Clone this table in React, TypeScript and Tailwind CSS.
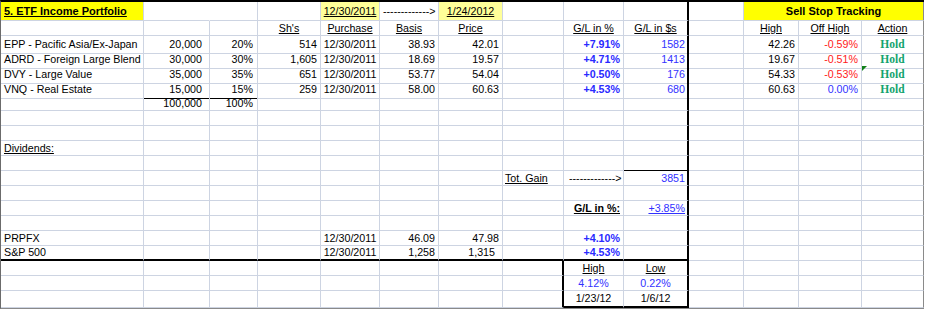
import type { ReactNode } from "react";
import { twMerge } from "tailwind-merge";

type CellSpec = {
  t?: ReactNode;
  a?: "l" | "r" | "c";
  cls?: string;
};

type RowSpec = {
  h?: string;
  cells: Record<number, CellSpec>;
  span?: Record<number, string>;
};

const BLUE = "text-[#3232ff]";
const BLUE_B = "text-[#2a2aff] font-bold";
const RED = "text-[#ff1a1a]";

const hold: CellSpec = {
  t: "Hold",
  a: "c",
  cls: "font-['Liberation_Serif',serif] font-bold text-[11.5px] text-[#12a36e]",
};

const head = (t: string): CellSpec => ({ t, a: "c", cls: "underline" });
const num = (t: ReactNode, cls = ""): CellSpec => ({ t, a: "r", cls });

const ARROW = "------------->";

function holding(
  name: string,
  amt: string,
  pct: string,
  sh: string,
  basis: string,
  price: string,
  gl: string,
  gld: string,
  high: string,
  off: string,
  offCls: string,
): Record<number, CellSpec> {
  return {
    0: { t: name },
    1: num(amt, "pr-[7px]"),
    2: num(pct, "pr-[4px]"),
    3: num(sh),
    4: { t: "12/30/2011", a: "c" },
    5: num(basis),
    6: num(price),
    8: num(gl, BLUE_B),
    9: num(gld, BLUE + " pr-[2px]"),
    11: num(high),
    12: num(off, offCls),
    13: hold,
  };
}

const rows: RowSpec[] = [
  {
    h: "h-[19px]",
    cells: {
      0: {
        t: "5. ETF Income Portfolio",
        cls: "bg-[#ffff00] font-bold underline text-[11px]",
      },
      1: { cls: "border-r-transparent" },
      4: { t: "12/30/2011", a: "c", cls: "bg-[#ffff99] underline" },
      5: { t: ARROW, cls: "pl-[3px]" },
      6: { t: "1/24/2012", a: "c", cls: "bg-[#ffff99] underline" },
      11: {
        t: "Sell Stop Tracking",
        a: "c",
        cls: "bg-[#ffff00] font-bold text-[11px] border-r-[#8a8a8a]",
      },
    },
    span: { 11: "col-span-3" },
  },
  {
    cells: {
      3: head("Sh's"),
      4: head("Purchase"),
      5: head("Basis"),
      6: head("Price"),
      8: head("G/L in %"),
      9: head("G/L in $s"),
      11: head("High"),
      12: head("Off High"),
      13: head("Action"),
    },
  },
  {
    cells: holding("EPP - Pacific Asia/Ex-Japan", "20,000", "20%", "514", "38.93", "42.01", "+7.91%", "1582", "42.26", "-0.59%", RED),
  },
  {
    cells: holding("ADRD - Foreign Large Blend", "30,000", "30%", "1,605", "18.69", "19.57", "+4.71%", "1413", "19.67", "-0.51%", RED),
  },
  {
    cells: {
      ...holding("DVY - Large Value", "35,000", "35%", "651", "53.77", "54.04", "+0.50%", "176", "54.33", "-0.53%", RED),
      13: { ...hold, t: <>
        <span className="absolute left-0 top-0 h-0 w-0 border-r-[5px] border-t-[5px] border-r-transparent border-t-[#11801a]" />
        Hold
      </>, cls: hold.cls + " relative" },
    },
  },
  {
    cells: (() => {
      const c = holding("VNQ - Real Estate", "15,000", "15%", "259", "58.00", "60.63", "+4.53%", "680", "60.63", "0.00%", BLUE);
      c[1] = { ...c[1], cls: c[1].cls + " border-b-black" };
      c[2] = { ...c[2], cls: c[2].cls + " border-b-black" };
      return c;
    })(),
  },
  { cells: { 1: num("100,000", "pr-[7px]"), 2: num("100%", "pr-[4px]") } },
  { cells: {} },
  { cells: {} },
  { cells: { 0: { t: "Dividends:", cls: "underline" } } },
  { cells: { 9: { cls: "border-b-black" } } },
  {
    cells: {
      7: { t: "Tot. Gain", cls: "underline pl-[2px]" },
      8: { t: ARROW, cls: "pl-[5px]" },
      9: num("3851", BLUE + " pr-[2px]"),
    },
  },
  { cells: {} },
  {
    cells: {
      8: num("G/L in %:", "font-bold underline"),
      9: num("+3.85%", BLUE + " underline pr-[2px]"),
    },
  },
  { cells: {} },
  {
    cells: {
      0: { t: "PRPFX" },
      4: { t: "12/30/2011", a: "c" },
      5: num("46.09"),
      6: num("47.98"),
      8: num("+4.10%", BLUE_B),
    },
  },
  {
    cells: {
      0: { t: "S&P 500" },
      4: { t: "12/30/2011", a: "c" },
      5: num("1,258"),
      6: num("1,315", "pr-[7px]"),
      8: num("+4.53%", BLUE_B),
    },
  },
  {
    cells: {
      7: { cls: "border-r-2 border-r-black" },
      8: head("High"),
      9: head("Low"),
    },
  },
  {
    cells: {
      7: { cls: "border-r-2 border-r-black" },
      8: { t: "4.12%", a: "c", cls: BLUE },
      9: { t: "0.22%", a: "c", cls: BLUE },
    },
  },
  {
    h: "h-[17px]",
    cells: {
      7: { cls: "border-r-2 border-r-black" },
      8: { t: "1/23/12", a: "c", cls: "border-b-2 border-b-black" },
      9: { t: "1/6/12", a: "c", cls: "border-b-2 border-b-black" },
    },
  },
];

function Cell({ spec, col, row }: { spec?: CellSpec; col: number; row: number }) {
  const a = spec?.a ?? "l";
  let base =
    "flex h-full items-center overflow-hidden whitespace-nowrap border-r border-b border-r-[#cdd4e2] border-b-[#cdd4e2] px-[3px] leading-none";
  if (a === "r") base += " justify-end";
  if (a === "c") base += " justify-center";
  if (col === 9) base += " border-r-2 border-r-black";
  if (col === 13) base += " border-r-[#8a8a8a]";
  if (row === 16 && col <= 9) base += " border-b-2 border-b-black";
  return <div className={twMerge(base, spec?.cls)}>{spec?.t}</div>;
}

export default function App() {
  return (
    <div className="h-[310px] w-[925px] bg-white font-['Liberation_Sans',Arial,sans-serif] text-[10.7px] text-black">
      <div className="w-[924px] border-b border-l border-t-2 border-b-[#8a8a8a] border-l-[#6b6b6b] border-t-black">
        {rows.map((r, ri) => {
          const cols: ReactNode[] = [];
          for (let c = 0; c < 14; c += 1) {
            const sp = r.span?.[c];
            cols.push(
              <div key={c} className={sp ?? ""}>
                <Cell spec={r.cells[c]} col={c} row={ri} />
              </div>,
            );
            if (sp === "col-span-3") c += 2;
          }
          return (
            <div
              key={ri}
              className={`grid grid-cols-[143px_66px_48px_63px_59px_59px_64px_61px_60px_65px_55px_55px_63px_62px] ${r.h ?? "h-[15px]"}`}
            >
              {cols}
            </div>
          );
        })}
      </div>
    </div>
  );
}
